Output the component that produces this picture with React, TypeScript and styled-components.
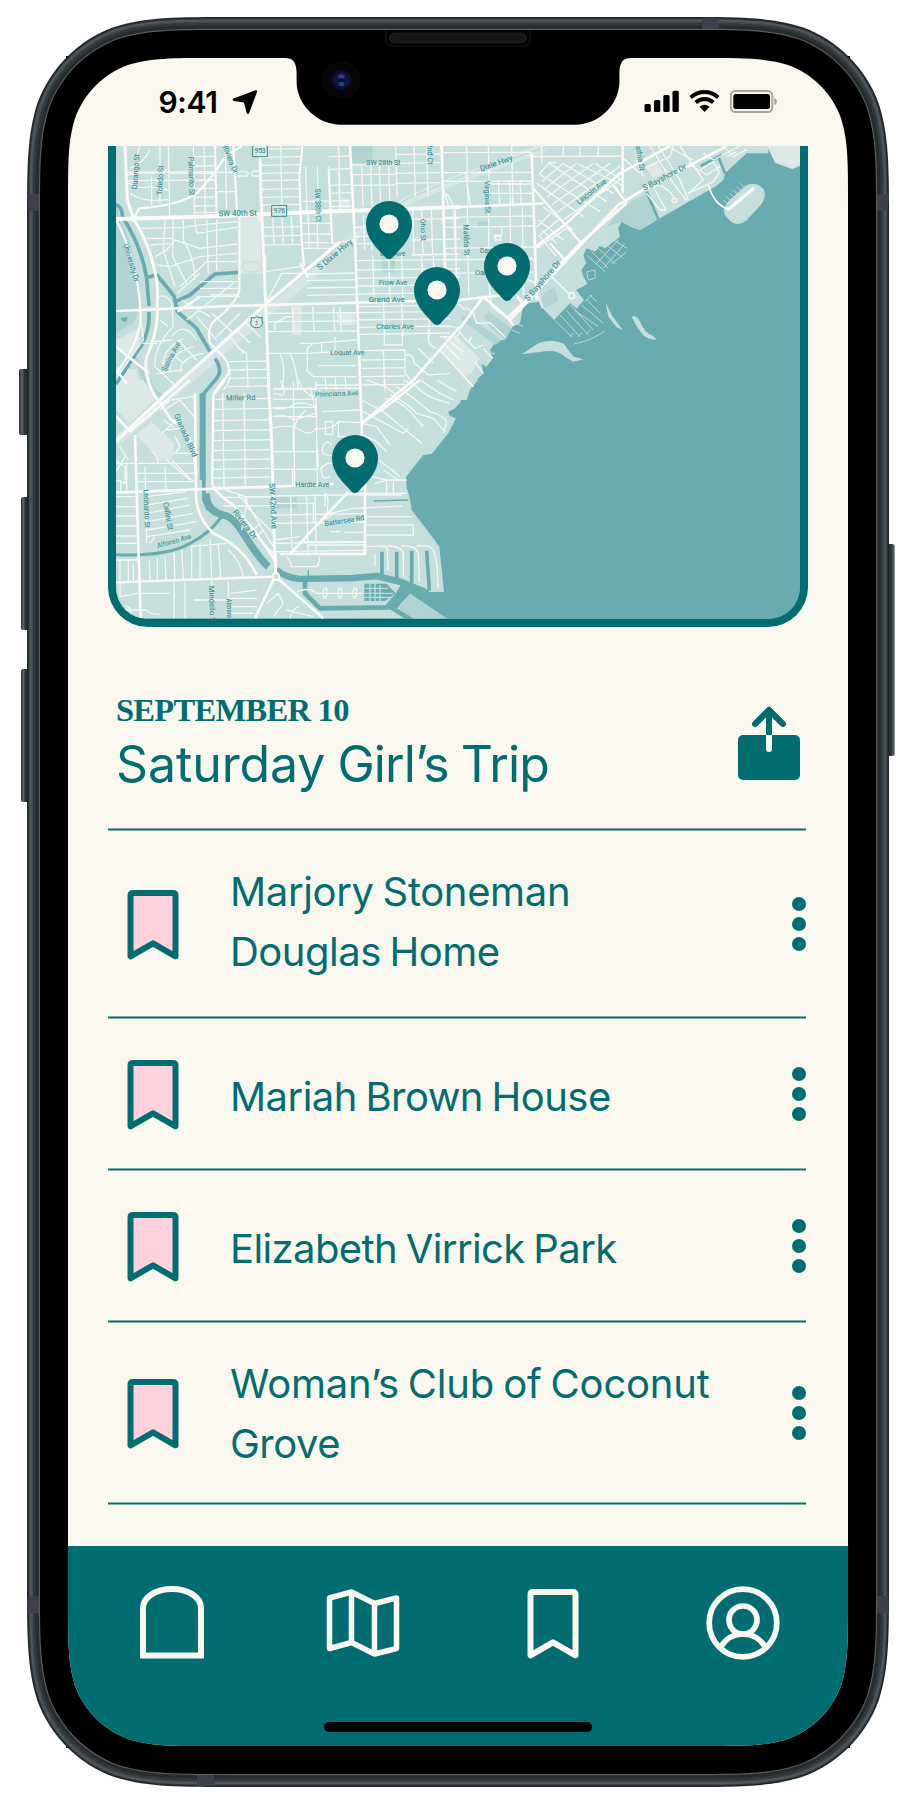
import React from "react";
import styled, { createGlobalStyle } from "styled-components";

const teal = "#016d71";
const cream = "#faf7ef";
const land = "#c6dfdc";
const park = "#b1d4d2";
const pale = "#dce9e6";
const water = "#68acb0";
const road = "#fafaf6";
const label = "#2c888b";
const lineEdge = "rgba(1, 109, 113, 0.5)";

const GlobalStyle = createGlobalStyle`
  * { box-sizing: border-box; }
  body { margin: 0; background: #fff; }
  h1, h2, p, ul { margin: 0; padding: 0; font-weight: inherit; }
`;

/* Continuous-curvature rounded rectangle */
const squircle = (x: number, y: number, w: number, h: number, r: number) => {
  const a = 1.528665 * r, b = 1.088493 * r, c = 0.868407 * r, d = 0.631494 * r;
  const e = 0.372824 * r, f = 0.169059 * r, g = 0.074911 * r;
  const X = x + w, Y = y + h;
  return [
    `M${x + a} ${y}H${X - a}`,
    `C${X - b} ${y} ${X - c} ${y} ${X - d} ${y + g}`,
    `C${X - e} ${y + f} ${X - f} ${y + e} ${X - g} ${y + d}`,
    `C${X} ${y + c} ${X} ${y + b} ${X} ${y + a}`,
    `V${Y - a}`,
    `C${X} ${Y - b} ${X} ${Y - c} ${X - g} ${Y - d}`,
    `C${X - f} ${Y - e} ${X - e} ${Y - f} ${X - d} ${Y - g}`,
    `C${X - c} ${Y} ${X - b} ${Y} ${X - a} ${Y}`,
    `H${x + a}`,
    `C${x + b} ${Y} ${x + c} ${Y} ${x + d} ${Y - g}`,
    `C${x + e} ${Y - f} ${x + f} ${Y - e} ${x + g} ${Y - d}`,
    `C${x} ${Y - c} ${x} ${Y - b} ${x} ${Y - a}`,
    `V${y + a}`,
    `C${x} ${y + b} ${x} ${y + c} ${x + g} ${y + d}`,
    `C${x + f} ${y + e} ${x + e} ${y + f} ${x + d} ${y + g}`,
    `C${x + c} ${y} ${x + b} ${y} ${x + a} ${y}Z`,
  ].join("");
};

const Stage = styled.main`
  position: relative;
  width: 916px;
  height: 1810px;
  padding: 58px 68px 64px;
  overflow: hidden;
  background: #fff;
`;

const Overlay = styled.svg`
  position: absolute;
  inset: 0;
  pointer-events: none;
`;

const Screen = styled.div`
  position: relative;
  width: 780px;
  height: 1688px;
  display: flex;
  flex-direction: column;
  background: ${cream};
  clip-path: path("${squircle(0, 0, 780, 1688, 95)}");
  font-family: Inter, "Liberation Sans", sans-serif;
  color: ${teal};
`;

const StatusBar = styled.header`
  height: 88px;
  padding: 30px 70.5px 0 90.5px;
  display: flex;
  justify-content: space-between;
  align-items: flex-start;
  color: #000;
`;

const StatusGroup = styled.div<{ $gap: number }>`
  display: flex;
  align-items: center;
  gap: ${(p) => p.$gap}px;
`;

const Clock = styled.span`
  font-size: 30px;
  line-height: 28px;
  font-weight: 600;
  letter-spacing: -0.35px;
`;

const MapCard = styled.section`
  position: relative;
  width: 700px;
  height: 481px;
  margin-left: 40px;
  border: 8px solid ${teal};
  border-top: 0;
  border-radius: 0 0 40px 40px;
  overflow: hidden;
  background: ${water};
  svg { display: block; }
`;

const PinMark = styled.svg<{ $x: number; $y: number }>`
  position: absolute;
  left: ${(p) => p.$x - 23 - 116}px;
  top: ${(p) => p.$y - 23 - 146}px;
`;

const TripHeader = styled.div`
  height: 202px;
  padding: 68px 48px 0 48px;
  display: flex;
  justify-content: space-between;
`;

const TripDate = styled.p`
  font: 700 32.5px/30px "Liberation Serif", serif;
  letter-spacing: -0.7px;
`;

const TripTitle = styled.h1`
  margin-top: 9px;
  font-size: 50px;
  line-height: 60px;
  font-weight: 400;
  white-space: nowrap;
  word-spacing: -2px;
`;

const Word = styled.span<{ $ls: number }>`
  letter-spacing: ${(p) => p.$ls}px;
`;

const ShareButton = styled.span`
  padding-top: 11px;
`;

const StopList = styled.ul`
  list-style: none;
  margin: 0 42px 0 40px;
  border-top: 1px solid ${teal};
  box-shadow: 0 -1px ${lineEdge};
`;

const Stop = styled.li<{ $h: number }>`
  height: ${(p) => p.$h}px;
  border-bottom: 1px solid ${teal};
  box-shadow: 0 1px ${lineEdge}, inset 0 -1px ${lineEdge};
  display: flex;
  align-items: center;

  &:first-child {
    box-shadow: 0 1px ${lineEdge}, inset 0 -1px ${lineEdge}, inset 0 1px ${lineEdge};
  }
`;

const StopIcon = styled.span`
  width: 122px;
  padding: 1px 0 0 19px;
  svg { display: block; }
`;

const StopName = styled.h2<{ $above: number; $below: number }>`
  flex: 1;
  padding: ${(p) => p.$above}px 0 ${(p) => p.$below}px;
  font-size: 40px;
  line-height: 60px;
  font-weight: 400;
  white-space: nowrap;
  word-spacing: -2px;
`;

const NameLine = styled.span<{ $ls: number }>`
  display: block;
  letter-spacing: ${(p) => p.$ls}px;
`;

const Dots = styled.span`
  display: grid;
  gap: 6px;
`;

const Dot = styled.i`
  width: 14px;
  height: 14px;
  border-radius: 50%;
  background: ${teal};
`;

const TabBar = styled.nav`
  margin-top: auto;
  height: 200px;
  display: flex;
  flex-direction: column;
  align-items: center;
  background: ${teal};
`;

const Tabs = styled.div`
  align-self: flex-start;
  height: 176px;
  padding: 40px 0 0 70px;
  display: grid;
  grid-template-columns: 188px 201px 179px 74px;
`;

const HomeIndicator = styled.span`
  width: 268px;
  height: 10px;
  border-radius: 5px;
  background: #000;
`;

const Bezel = () => (
  <Overlay width="916" height="1810" viewBox="0 0 916 1810">
    <defs>
      <linearGradient id="key" x1="0" x2="1">
        <stop offset="0" stopColor="#2a3135" />
        <stop offset="0.25" stopColor="#5d6366" />
        <stop offset="0.45" stopColor="#2a3134" />
        <stop offset="1" stopColor="#252c30" />
      </linearGradient>
      <linearGradient id="keyRight" x1="1" x2="0">
        <stop offset="0" stopColor="#2a3135" />
        <stop offset="0.15" stopColor="#5d6366" />
        <stop offset="0.35" stopColor="#2a3134" />
        <stop offset="1" stopColor="#252c30" />
      </linearGradient>
    </defs>
    <rect x="19" y="369" width="12" height="66" rx="2" fill="url(#key)" />
    <rect x="21" y="497" width="10" height="133" rx="2" fill="url(#key)" />
    <rect x="21" y="669" width="10" height="133" rx="2" fill="url(#key)" />
    <rect x="885" y="544" width="9.5" height="212" rx="2" fill="url(#keyRight)" />
    <path d="M66 56H850V1748H66Z" fill="#000" />
    <path d={squircle(27, 17, 862, 1770, 137)} fill="#20272b" />
    <path d={squircle(28.5, 18.5, 859, 1767, 135.5)} fill="#343b3f" />
    <path d={squircle(29.5, 19.5, 857, 1765, 134.5)} fill="#50575a" />
    <path d={squircle(31.5, 21.5, 853, 1761, 132.5)} fill="#42494c" />
    <path d={squircle(33, 23, 850, 1758, 131)} fill="#31383c" />
    <path d={squircle(35.5, 25.5, 845, 1753, 128.5)} fill="#252c30" />
    <path d="M28 194h11v17H28zM877 194h11v17h-11zM28 1596h11v17H28zM877 1596h11v17h-11zM702 18h17v11h-17zM197 1775h17v11h-17z" fill="#3d404a" />
    <path d={squircle(38.8, 28.8, 838.4, 1746.4, 124.8)} fill="#5d5b58" />
    <path d={squircle(40, 30, 836, 1744, 123.5)} fill="#000" />
  </Overlay>
);

const Notch = () => (
  <Overlay width="916" height="140" viewBox="0 0 916 140">
    <path d="M280 54V58H285C293 58 296 62 296.6 72V82C297 106 318 124.7 341 124.7H575C598 124.7 619 106 619.4 82V72C620 62 623 58 631 58H636V54Z" fill="#000" />
    <path d="M386 30V39Q386 46 393 46H523Q530 46 530 39V30" fill="none" stroke="#1b1b1b" strokeWidth="1" />
    <rect x="389.5" y="33" width="137" height="10" rx="5" fill="#171717" stroke="#202020" />
    <circle cx="341.5" cy="80" r="19" fill="#070508" />
    <circle cx="341.5" cy="80" r="10" fill="#0b1033" />
    <circle cx="341.5" cy="80" r="7.5" fill="#0e1648" />
    <ellipse cx="341.5" cy="76.5" rx="3.2" ry="2.2" fill="#3b3590" />
    <ellipse cx="341.5" cy="84" rx="2.8" ry="2.2" fill="#1a4a70" />
    <circle cx="341.5" cy="80" r="2" fill="#0a0d30" />
  </Overlay>
);

const Pin = ({ x, y }: { x: number; y: number }) => (
  <PinMark $x={x} $y={y} width="46" height="60" viewBox="0 0 46 60">
    <path d="M23 0A23 23 0 0 1 46 23C46 39 32 50 26.500 56.500Q23 59.500 19.500 56.500C14 50 0 39 0 23A23 23 0 0 1 23 0Z" fill={teal} />
    <circle cx="23" cy="23" r="9.6" fill={cream} />
  </PinMark>
);

/* Street blocks: vertical lines at xs and horizontal lines at ys inside a box */
const block = (x0: number, y0: number, x1: number, y1: number, xs: number[], ys: number[], tilt = 0) =>
  xs.map((x) => `M${x} ${y0}L${x + 4} ${y1}`).join("") +
  ys.map((y) => `M${x0} ${y}L${x1} ${y - tilt}`).join("");

type LabelProps = { x: number; y: number; r?: number; w?: number; s?: number; children: string };
const T = ({ x, y, r = 0, w, s = 23, children }: LabelProps) => (
  <text
    transform={`translate(${x} ${y}) rotate(${r})`}
    fontSize={s}
    textAnchor="middle"
    dominantBaseline="central"
    textLength={w}
    lengthAdjust="spacingAndGlyphs"
  >
    {children}
  </text>
);

const northWest =
  block(75, 18, 345, 228, [205, 280], [97, 122], 2) +
  block(280, 18, 345, 228, [312], [50, 78, 122, 146, 172, 198, 218], 1) +
  block(345, 18, 412, 228, [376], [97, 155], 0) +
  block(484, 18, 600, 215, [542], [28, 52, 76, 100, 122, 148, 172, 195], 2) +
  block(490, 230, 608, 315, [518, 546, 574], [262, 288, 315], 2) +
  block(610, 80, 750, 215, [617, 652, 686, 716], [184], 2) +
  block(686, 18, 755, 215, [716], [50, 88, 136, 160, 200], 2) +
  block(756, 75, 885, 200, [785, 812, 838, 866], [75, 104, 136], 1) +
  block(885, 18, 1020, 170, [887, 942, 980], [44, 70, 100, 130], 2) +
  block(608, 220, 690, 330, [624, 650], [250, 282, 308, 325], 0) +
  block(765, 225, 830, 330, [790, 812], [262, 290, 312], 2) +
  block(935, 210, 1080, 345, [938, 965, 994, 1062], [238, 300, 345], 3) +
  block(768, 345, 1080, 480, [818, 866, 905, 965, 1000], [362, 390, 415, 438, 462], 4) +
  block(774, 485, 1050, 590, [850, 905, 985], [500, 518, 540, 562, 583], 4) +
  "M853 590V615H907V583M690 230L697 310L765 300M497 345V395L600 380M497 490L545 400H600" +
  block(620, 400, 770, 485, [], [402, 422, 444, 466], 3) +
  block(505, 500, 770, 575, [577, 638, 700, 720], [520, 545, 575], 2) +
  "M525 570V550L560 530H577M600 610L640 610L770 600M622 690V625L640 610M495 640H620L770 632M665 605V640M705 590V630M540 640Q560 690 545 750M570 640Q590 680 595 750M620 690L640 710H770M655 677H770" +
  block(385, 640, 505, 745, [440], [665, 690, 715, 740], 2) +
  block(645, 710, 780, 750, [675, 705, 735], [735], 0) +
  block(785, 632, 915, 750, [850], [632, 660, 685, 710, 735], 2) +
  "M915 632V700L945 735M918 645Q940 640 942 668L985 705L1050 700M985 570V600Q990 620 1010 625M955 625L1000 670M1030 610L1080 660" +
  "M90 85Q130 70 150 30M82 105Q130 95 160 100L200 90M82 125Q110 150 150 140L205 150M90 160Q130 190 205 178M110 60L118 18M155 110V195M180 18V190M205 100H345" +
  "M195 240L190 330L225 440M220 240L218 350L260 430M250 240V300Q285 360 285 420M285 238L290 280Q350 270 412 262M320 240L325 400M350 238V390M125 265L250 262Q290 255 412 245M140 295H220M150 315L210 310M165 350L200 330L225 300L300 325L412 312M172 375L210 380L300 350L412 340M240 440L320 365L412 365" +
  "M300 425H415M300 445H415M330 465H418M232 460L300 400M290 470L420 470M175 470Q200 460 215 490L220 560Q160 620 165 680L230 740M245 480L330 530M260 540L400 430M290 530L350 600M335 520L400 580M350 590L420 520M360 610L460 525M390 590L430 640M410 570L450 610M440 550L480 590" +
  "M160 605L215 600M180 540L205 560M215 590Q250 540 290 600M190 690Q180 630 250 595M210 690Q210 640 280 620M240 700Q240 650 310 640M170 700L250 690M215 640L250 670M235 600L290 660M48 620L140 690M122 520L130 600L60 700M128 610L170 610M48 690L80 730M100 660L150 700M385 670Q400 720 370 750M410 620L440 640";

const northEast =
  block(10, 18, 275, 195, [80, 145, 215], [38, 98, 124], 1) +
  block(150, 120, 275, 195, [175, 208, 240], [132, 160], 0) +
  block(10, 200, 280, 465, [46, 82, 145, 210, 247], [232, 262, 325, 360, 400], 4) +
  "M75 95L92 195M20 160L40 195M5 130L25 195M160 290H185V265M165 300V285H182V300ZM250 410L285 430M270 350L290 370M145 400L150 465" +
  "M298 102L328 68L350 68M305 125L370 70M310 150L410 70M320 172L460 70M335 195L510 70M350 218L540 78M370 240L545 115M328 70L500 185M368 70L520 160M415 72L545 135M465 70L548 120M298 102L480 215M290 130L430 230M310 200L400 270M330 222L290 262M360 235L295 290M380 265L290 325M295 240L370 300M305 270L350 310M275 50L545 48M305 18V70M370 18V48M420 18V48M475 18V48" +
  "M590 60L610 110M545 50L600 100M520 140L560 190M600 90L690 50L700 18M630 18L700 130L740 182M655 18L720 120L745 180M680 18L760 60M720 18L790 120L745 160L820 125L838 98L820 65L780 90M745 70L800 105L840 80M790 40L820 60L900 18M850 18L880 50L920 28M860 50L890 35" +
  "M620 160L660 210H678L645 150M640 145Q655 125 675 145Q700 160 703 180" +
  "M75 500L100 520L110 550L150 548L195 590M30 560Q50 555 70 590L105 625L130 615M10 590L70 635M85 610L95 590M60 575L50 590M45 590L60 610M130 625L158 655M105 665L130 700M0 560H40M0 590H35M45 480L75 510M150 470L155 500L180 520" +
  "M335 410L385 460M295 470L300 485L307 505M230 465L255 490M300 290L350 350";

const southWest =
  block(340, 40, 515, 325, [368, 432], [58, 88, 122, 152, 182, 212, 240, 268, 294, 322], 3) +
  block(370, 330, 520, 500, [], [352, 378], 1) +
  "M440 380V350M440 380L520 460M410 340L445 378L520 500M460 400L430 350M440 375L425 450M480 430L450 460M490 450L470 470M375 330L440 350H515M470 470L520 520" +
  block(518, 5, 650, 320, [580, 648], [28, 58, 82, 110], 0) +
  "M520 25H780M518 85Q560 90 580 75T648 80M518 110Q560 100 580 120L648 100M518 145Q570 130 600 150T648 145M580 210V150Q590 110 620 90M520 215H652V268H520M578 265V320M540 0Q560 30 550 45L520 40M595 0Q610 40 640 50L660 30M630 20Q640 60 648 95M650 180L655 260M668 95L780 90M648 145Q700 150 715 125L780 128M715 125V170H780M676 125H698V163H676ZM700 225Q660 230 668 200Q680 175 695 195M660 268Q680 245 700 250M690 290Q660 305 665 265" +
  block(518, 345, 800, 520, [572, 620, 645], [348, 405, 430, 490, 515], 4) +
  "M675 340Q690 350 680 400Q665 430 700 400M675 340V380M690 400L760 385L905 378M640 430V370H520M690 455H720M732 457H795M735 340H920M800 345H905M800 410H938M800 435H940V465H800M600 485H800M620 495H800M815 290L860 300H920M825 310L860 300V340M880 305V340" +
  "M785 60L850 95L965 190M790 95L910 160L925 145M855 55Q900 60 930 95L970 140M870 45Q910 60 950 100L1000 115L1035 155M890 20L935 50L990 95Q1040 110 1040 130L1030 160M910 0L950 20Q970 40 1000 55L1050 70M960 0L1020 40L1060 60M1010 0L1070 35M785 130L830 140L870 195M790 165L830 185L860 215M835 240L870 265L900 290M850 270L895 300M800 0L855 20V0M855 20L885 40" +
  "M48 250H285M110 280H285M115 305H280M48 300L75 310V260L48 240M48 275L75 230M60 200L85 240M135 260L140 490M195 260L198 330M150 490L165 470M140 350L258 335M140 375L262 355M140 400L270 375M140 425L280 400M140 450L290 425M140 470L270 450M48 350H105M48 380H108M48 408H110M48 438H110M48 468H110M48 490H110M48 540H118M62 340V300M80 340V250" +
  "M60 540V600M85 540V600M100 550V600M148 540L150 600M172 535V600M195 530L198 600M222 518L225 598M245 510L250 598M275 500V596M300 490V594M330 475L335 592M355 490L362 592M385 510Q420 540 430 590M270 500L380 490" +
  "M200 85L240 60L290 120M215 60L280 50M190 120L220 140M200 150L240 145M185 160L230 120M225 170L240 200L225 220H285M200 240L270 300M215 240L280 305M180 90L210 60" +
  "M60 605V650L115 640M125 640L210 640M222 605V715M255 605V715M282 660H385M390 640L470 630M385 655L470 655M385 680L470 680M390 700H460M335 600V620M385 605V650M75 680Q90 675 95 700M70 690H140Q150 705 180 703M175 250Q170 220 155 215" +
  "M560 530Q570 540 575 560H650Q660 550 657 530M500 670Q525 650 535 640L550 670L520 710M570 715Q580 680 600 680M560 690L640 710M590 635Q630 620 650 640H790M673 625Q665 640 673 655Q683 655 680 625ZM718 625Q710 640 718 655Q728 655 725 625ZM762 625Q754 640 762 655Q772 655 769 625Z" +
  "M800 500L850 498M850 498Q865 500 862 515L865 570M862 498Q905 498 910 520V590M905 498Q950 495 955 520L958 605M950 498H985Q1005 505 1010 550L1015 625M825 520V560M520 480L600 470";

const MapArt = () => (
  <svg width="684" height="473" viewBox="116 146 684 473">
    <rect x="116" y="146" width="684" height="473" fill={water} />
    <g transform="translate(100 140) scale(.33333)" fill="none" strokeLinejoin="round" strokeLinecap="butt">
      {/* land */}
      <g fill={land}>
        <path d="M40 10H1040V760H40Z" />
        <path transform="translate(1020 0)" d="M0 10H985V40L920 40L855 100L850 120L830 137L655 238L620 258L600 270L575 262L545 245L535 265L540 290L520 305L495 325L480 318L465 335L440 325L430 345L438 370L425 390L428 405L443 432L408 450L432 480L410 505L390 490L342 540L304 500L298 485L265 490L248 505L240 550L218 560L195 600L170 600L150 630L158 655L140 680L125 672L130 700L115 715L90 750L80 780H0Z" />
        <path transform="translate(0 720)" d="M40 0H1135L1110 28L1098 22L1080 45L1083 65L1065 85L1045 95L1050 108L1068 115L1045 160L995 222L970 225L918 290L920 325L928 345L935 390L1000 475L1018 500L1032 636H985L940 612L920 615V635L1040 715H40Z" />
        <path transform="translate(1020 0)" d="M852 210Q855 190 880 170L915 138Q950 120 972 150Q980 175 962 195L918 243Q890 262 868 240Q850 225 852 210Z" />
        <path transform="translate(1020 0)" d="M245 643L295 610Q330 595 370 610L400 650L430 658L400 665L375 650Q350 625 300 636ZM497 487L515 525L548 570L530 562L505 530ZM575 530Q590 525 600 545Q615 580 635 585L650 598Q635 602 615 590L595 568Z" />
      </g>
      <path transform="translate(1020 0)" d="M980 15L1005 68L1057 87L1085 75V15Z" fill={pale} />
      {/* parks and plots */}
      <g fill={park}>
        <path d="M48 190L62 240Q105 330 108 400Q130 500 100 550L48 580ZM755 18H818V68H755ZM845 345H885V398H845ZM425 315L458 312L465 350L430 365ZM100 640Q120 700 130 750H155L140 690Z" />
        <path transform="translate(1020 0)" d="M555 195L620 160L655 238L600 270L575 262L545 245L500 260ZM305 465L345 440L355 485L312 505ZM130 530L145 515L215 565L195 600L160 570ZM60 535L80 525L185 600L165 615ZM112 245H145V262H112Z" />
        <path transform="translate(0 720)" d="M528 350H590V385H528ZM130 0Q150 50 180 60L190 45Q160 30 155 0ZM930 640L890 680L935 715H1040Z" />
      </g>
      <g fill={pale}>
        <path d="M417 228H478L486 400H420ZM577 497H605V585H577ZM712 520H765V555H712ZM48 600L112 568L120 600L105 650L48 620ZM48 680L110 690L125 750H48ZM722 175H750V205H722Z" />
        <path transform="translate(1020 0)" d="M0 635L40 580L120 655L95 700L75 710ZM615 80L650 65L672 100L640 115Z" />
        <path transform="translate(0 720)" d="M48 0H130L170 55L90 130L48 90ZM110 165L155 125L222 190V225L205 242L180 243Z" />
      </g>
      {/* railway corridor */}
      <g stroke="#d6e6e4" strokeLinejoin="round">
        <path d="M1340 20L1080 115L925 180L790 265L640 400L470 545L340 655L48 905" strokeWidth="26" />
        <path d="M1340 20L1080 110L925 175L790 255L640 385" strokeWidth="3" stroke={park} />
      </g>
      {/* canals */}
      <g stroke={water} strokeWidth="11">
        <path d="M48 194Q66 198 68 232Q125 320 140 415L147 498M147 516Q150 570 125 615L98 655Q70 700 48 732" />
        <path d="M145 412L170 404L222 468L232 515L290 565L330 635M345 655Q370 690 350 715Q320 750 308 765L312 1080L325 1110" />
        <path d="M228 484L270 465L345 402L415 397" />
        <path transform="translate(0 720)" d="M308 40V300" strokeWidth="18" />
        <path transform="translate(0 720)" d="M318 340Q320 395 370 405Q400 410 430 460Q480 540 505 560" strokeWidth="22" />
        <path transform="translate(0 720)" d="M48 524Q200 530 270 490Q330 460 365 410" strokeWidth="9" />
        <path transform="translate(0 720)" d="M528 570Q560 595 600 597L760 594L830 588L900 605L985 640" strokeWidth="20" />
        <path transform="translate(0 720)" d="M615 590V640L660 685L860 682L910 625M870 680L935 720" strokeWidth="14" />
        <path transform="translate(0 720)" d="M846 515V590M890 515V600M935 512V610M980 512L988 632" strokeWidth="11" />
        <path transform="translate(0 720)" d="M625 570V590M822 363L925 360" strokeWidth="4" />
        <path transform="translate(1020 0)" d="M620 155L655 238M782 78L845 45M835 50L855 100" strokeWidth="8" />
      </g>
      <path d="M62 535L82 530L80 545L66 543Z" fill={water} />
      <g fill={water} transform="translate(0 720)">
        <path d="M793 611H860L887 640L855 663H793ZM905 610L1060 715H1040L930 640L890 685L860 690Z" />
      </g>
      {/* local streets */}
      <g stroke={road} strokeWidth="4" strokeOpacity="0.92">
        <path d={northWest} />
        <path d={northEast} transform="translate(1020 0)" />
        <path d={southWest} transform="translate(0 720)" />
        <path d="M428 372Q430 366 440 366H470Q482 370 482 385Q480 396 465 396H440Q428 395 428 372Z" stroke={land} />
        <path d="M413 95H440Q450 100 440 108H413M478 93H460Q448 100 460 108H478" />
        <circle cx="1723" cy="181" r="7" />
        <circle cx="1415" cy="467" r="9" strokeWidth="5" />
        <path d="M810 611V663M825 611V663M840 615V663M793 625H865M793 640H880M793 652H870" transform="translate(0 720)" stroke={land} />
      </g>
      {/* marina piers */}
      <g stroke={land} strokeWidth="2.8" transform="translate(1020 0)">
        <path d="M345 542L395 590M360 525L420 590M378 510L445 585M392 495L460 570M405 512L475 560M425 495L490 550M440 478L480 520M390 590L400 580M412 590L428 578M440 580L452 570M450 465L470 485M435 485L455 465M402 612Q460 600 495 572" />
        <path d="M440 345L495 395M455 335L505 385M475 325L525 372M500 315L550 355M520 300L562 325M470 370L535 300M490 385L555 310M515 372L560 335M440 395L465 390L465 415L445 420ZM850 180L865 195M860 170L875 185M870 160L885 175M880 150L895 165M890 140L905 155M900 130L915 145M215 570L240 580M225 550L250 560M130 640L165 640M80 705L110 715" />
      </g>
      {/* arterial roads */}
      <g stroke={road} strokeWidth="8">
        <path strokeWidth="12" d="M48 237L345 229L640 216L1080 201" />
        <path d="M1080 201L1330 190" />
        <path d="M48 513L420 497L1080 480L1200 466" />
        <path d="M75 18L82 180L100 235Q160 330 172 440V530Q168 590 140 650Q130 700 160 760L215 840Q285 880 288 1000" strokeWidth="9" />
        <path d="M479 18L484 200L497 490L507 760L515 900L524 1240L527 1310" strokeWidth="9" />
        <path d="M345 18L350 228M400 18L412 228M607 18L598 110L605 300L612 380M478 230L488 260M686 90L697 310" strokeWidth="6.5" />
        <path d="M750 18L765 300L772 500L785 850" />
        <path d="M1025 18L1030 200L1038 480M1295 40L1305 320L1310 480" />
        <path d="M48 905L200 760L500 490L720 305" strokeWidth="10" />
        <path d="M95 245L118 205Q240 195 290 160Q340 110 365 65Q380 45 425 18" strokeWidth="7" />
        <path d="M50 242Q115 370 122 520Q125 600 48 700M418 228V450Q410 490 340 545Q320 570 330 610L375 655Q400 700 370 720L340 760" strokeWidth="6.5" />
        <path d="M600 370L625 412M232 515L300 470M48 620L140 695M48 690L80 730" strokeWidth="7" />
        <path d="M1080 560L940 720L785 850L785 1050M1080 565L1150 470L1230 540L1400 360L1555 195L1620 155L1880 18" />
        <path d="M1220 535L1275 485L1440 310L1580 190M1300 325L1400 250L1560 100L1710 18" />
        <path d="M1300 145L1440 305M1568 18V160M1540 135L1580 190M1250 470L1265 490M1220 530L1240 555M1395 360L1350 310" strokeWidth="7" />
        <path d="M1020 630L1120 740" strokeWidth="5" />
        <path d="M1825 135Q1845 200 1890 208L1960 145" strokeWidth="5" />
        <path d="M1885 208L1960 146" strokeWidth="10" strokeLinecap="round" />
        <g transform="translate(0 720)">
          <path d="M48 338L290 328L520 320L700 312" />
          <path d="M105 165L112 400L122 715M48 108L90 155" />
          <path d="M340 45L337 310Q345 340 400 375Q480 470 527 545M375 0L340 45" />
          <path d="M285 40L288 350Q290 410 340 460Q430 500 470 585" strokeWidth="8" />
          <path d="M48 607L520 590" strokeWidth="7" />
          <path d="M527 520V590L670 715M525 590L465 715M540 522H797M795 310V525M570 522L745 335M527 540V520" />
          <path d="M270 0L90 155M960 0L865 75L785 130" strokeWidth="7" />
          <circle cx="528" cy="590" r="10" fill={land} strokeWidth="6" />
        </g>
      </g>
      {/* route shields */}
      <g fill={pale} stroke={label} strokeWidth="3">
        <path d="M458 14H502V50H458ZM515 196H560V229H515Z" />
        <path d="M453 532L463 534L470 530L477 534L487 532Q484 540 488 550Q485 563 470 563Q455 563 452 550Q456 540 453 532Z" />
      </g>
      <g fill={label} stroke={land} strokeWidth="2.5" paintOrder="stroke" fontFamily="Roboto, 'Open Sans', sans-serif">
        <T x={480} y={34} s={20}>953</T>
        <T x={538} y={214} s={20}>976</T>
        <T x={470} y={548} s={18}>1</T>
        <T x={107} y={95} r={-86} w={106}>Durango St</T>
        <T x={181} y={121} r={-87} w={88}>Toledo St</T>
        <T x={274} y={108} r={88} w={116}>Palmarito St</T>
        <T x={391} y={58} r={68} w={88}>Riviera Dr</T>
        <T x={413} y={220} r={-1} w={114} s={24}>SW 40th St</T>
        <T x={850} y={69} w={102} s={21}>SW 28th St</T>
        <T x={654} y={196} r={88} w={100}>SW 38th Ct</T>
        <T x={990} y={42} r={88} w={64}>2nd Ct</T>
        <T x={968} y={270} r={88} w={66} s={21}>Ohio St</T>
        <T x={94} y={368} r={74} w={118}>University Dr</T>
        <T x={704} y={343} r={-40} w={130} s={25}>S Dixie Hwy</T>
        <T x={878} y={342} w={76} s={20}>Bird Ave</T>
        <T x={879} y={428} w={86} s={21}>Frow Ave</T>
        <T x={860} y={479} w={108} s={24}>Grand Ave</T>
        <T x={885} y={562} w={112} s={21}>Charles Ave</T>
        <T x={742} y={639} w={102} s={21}>Loquat Ave</T>
        <T x={213} y={650} r={-63} w={96}>Sistina Ave</T>
        <T x={1189} y={70} r={-20} w={102} s={24}>Dixie Hwy</T>
        <T x={1162} y={171} r={88} w={98}>Virginia St</T>
        <T x={1099} y={300} r={88} w={92}>Matilda St</T>
        <T x={1475} y={155} r={-39} w={108}>Lincoln Ave</T>
        <T x={1619} y={45} r={80} w={96}>Mathia St</T>
        <T x={1693} y={112} r={-28} w={144} s={24}>S Bayshore Dr</T>
        <T x={1328} y={422} r={-49} w={152} s={24}>S Bayshore Dr</T>
        <T x={1175} y={332} w={70} s={21}>Day Ave</T>
        <T x={1165} y={400} w={80} s={21}>Oak Ave</T>
        <g transform="translate(0 720)">
          <T x={422} y={53} r={-1} w={88} s={22}>Miller Rd</T>
          <T x={710} y={42} r={-2} w={130} s={21}>Poinciana Ave</T>
          <T x={257} y={166} r={66} w={140}>Granada Blvd</T>
          <T x={637} y={314} w={102} s={22}>Hardie Ave</T>
          <T x={519} y={378} r={87} w={136} s={24}>SW 42nd Ave</T>
          <T x={140} y={386} r={88} w={116}>Leonardo St</T>
          <T x={204} y={408} r={80} w={84}>Cellini St</T>
          <T x={435} y={433} r={53} w={104} s={24}>Riviera Dr</T>
          <T x={733} y={422} r={-9} w={120} s={22}>Battersea Rd</T>
          <T x={222} y={483} r={-16} w={106} s={22}>Alfonso Ave</T>
          <T x={336} y={675} r={88} w={116}>Mindello St</T>
          <T x={388} y={702} r={88} w={92}>Almansa St</T>
        </g>
      </g>
    </g>
  </svg>
);

const BookmarkIcon = ({ stroke, fill }: { stroke: string; fill: string }) => (
  <svg width="52" height="74" viewBox="0 0 52 74">
    <path
      d="M3.500 69.300V8.500Q3.500 6 6 6H46Q48.500 6 48.500 8.500V69.300L26 56.300Z"
      fill={fill}
      stroke={stroke}
      strokeWidth="6"
      strokeLinejoin="round"
    />
  </svg>
);

type StopInfo = { h: number; above: number; below: number; lines: [string, number][] };

const stops: StopInfo[] = [
  { h: 188, above: 0, below: 3, lines: [["Marjory Stoneman", -0.35], ["Douglas Home", -0.5]] },
  { h: 152, above: 6, below: 0, lines: [["Mariah Brown House", -0.55]] },
  { h: 152, above: 6, below: 0, lines: [["Elizabeth Virrick Park", -0.6]] },
  { h: 182, above: 3, below: 0, lines: [["Woman’s Club of Coconut", -0.2], ["Grove", -0.5]] },
];

export default function App() {
  return (
    <>
      <GlobalStyle />
      <Stage>
        <Bezel />
        <Screen>
          <StatusBar>
            <StatusGroup $gap={14}>
              <Clock>9:41</Clock>
              <svg width="26" height="28" viewBox="0 0 26 28">
                <path d="M1.500 10.500L23.500 2.200Q25.500 1.800 25 4L17.200 25Q15.500 27 14.500 24.500L12 14.500L2 13Q-.5 12 1.500 10.500Z" fill="#000" />
              </svg>
            </StatusGroup>
            <StatusGroup $gap={10}>
              <svg width="35" height="28" viewBox="0 0 35 28">
                <rect x="0.500" y="16" width="6.300" height="8" rx="1.500" />
                <rect x="10" y="12" width="6.300" height="12" rx="1.500" />
                <rect x="19.300" y="7" width="6.300" height="17" rx="1.500" />
                <rect x="28.500" y="2.700" width="6.300" height="21.300" rx="1.500" />
              </svg>
              <svg width="31" height="28" viewBox="0 0 31 28" fill="none" stroke="#000" strokeWidth="3.8">
                <path d="M1.700 9.500Q8 4 15.500 4T29.300 9.500" />
                <path d="M6.700 14.500Q10.500 11 15.500 11T24.300 14.500" />
                <path d="M10.500 18.700Q15.500 15 20.500 18.700L15.500 24Z" fill="#000" stroke="none" />
              </svg>
              <svg width="48" height="28" viewBox="0 0 48 28">
                <rect x="0.800" y="3" width="41.500" height="21" rx="4.500" fill="none" stroke="#a9a49f" strokeWidth="2" />
                <rect x="3.300" y="6" width="36.700" height="15" rx="2.500" />
                <path d="M44.300 10Q47 11 47 13.500T44.300 17Z" fill="#a9a49f" />
              </svg>
            </StatusGroup>
          </StatusBar>
          <MapCard>
            <MapArt />
            <Pin x={389} y={224} />
            <Pin x={437} y={290} />
            <Pin x={507} y={266} />
            <Pin x={355} y={458} />
          </MapCard>
          <TripHeader>
            <div>
              <TripDate>SEPTEMBER 10</TripDate>
              <TripTitle>
                <Word $ls={-0.1}>Saturday</Word> <Word $ls={-0.9}>Girl’s</Word> <Word $ls={-0.9}>Trip</Word>
              </TripTitle>
            </div>
            <ShareButton>
              <svg width="62" height="75" viewBox="0 0 62 75" fill="none" strokeWidth="6" strokeLinecap="round" strokeLinejoin="round">
                <rect x="0" y="29" width="62" height="45" rx="5" fill={teal} />
                <path d="M31 28V43" stroke={cream} />
                <path d="M31 29V4M17 18L31 4L45 18" stroke={teal} strokeLinecap="butt" />
                <path d="M17 18L31 4L45 18" stroke={teal} />
              </svg>
            </ShareButton>
          </TripHeader>
          <StopList>
            {stops.map((s) => (
              <Stop key={s.lines[0][0]} $h={s.h}>
                <StopIcon>
                  <BookmarkIcon stroke={teal} fill="#ffd1dd" />
                </StopIcon>
                <StopName $above={s.above} $below={s.below}>
                  {s.lines.map(([text, ls]) => (
                    <NameLine key={text} $ls={ls}>{text}</NameLine>
                  ))}
                </StopName>
                <Dots>
                  <Dot />
                  <Dot />
                  <Dot />
                </Dots>
              </Stop>
            ))}
          </StopList>
          <TabBar>
            <Tabs>
              <svg width="66" height="76" viewBox="0 0 66 76" fill="none" stroke={cream} strokeWidth="6">
                <path d="M5 69.500V22C5 11 18 3 34 3S63 11 63 22V69.500Z" />
              </svg>
              <svg width="74" height="76" viewBox="0 0 74 76" fill="none" stroke={cream} strokeWidth="5.500" strokeLinejoin="round">
                <path d="M3.500 12L25.500 6L48.500 17.500L70.500 12V62.500L48.500 68L25.500 56.500L3.500 62.500ZM25.500 6V56.500M48.500 17.500V68" />
              </svg>
              <BookmarkIcon stroke={cream} fill="none" />
              <svg width="74" height="76" viewBox="0 0 74 76" fill="none" stroke={cream} strokeWidth="5.700">
                <circle cx="37" cy="37" r="33.800" />
                <circle cx="37" cy="34" r="14" />
                <path d="M14.500 61Q23 48 37 48T59.500 61" />
              </svg>
            </Tabs>
            <HomeIndicator />
          </TabBar>
        </Screen>
        <Notch />
      </Stage>
    </>
  );
}
